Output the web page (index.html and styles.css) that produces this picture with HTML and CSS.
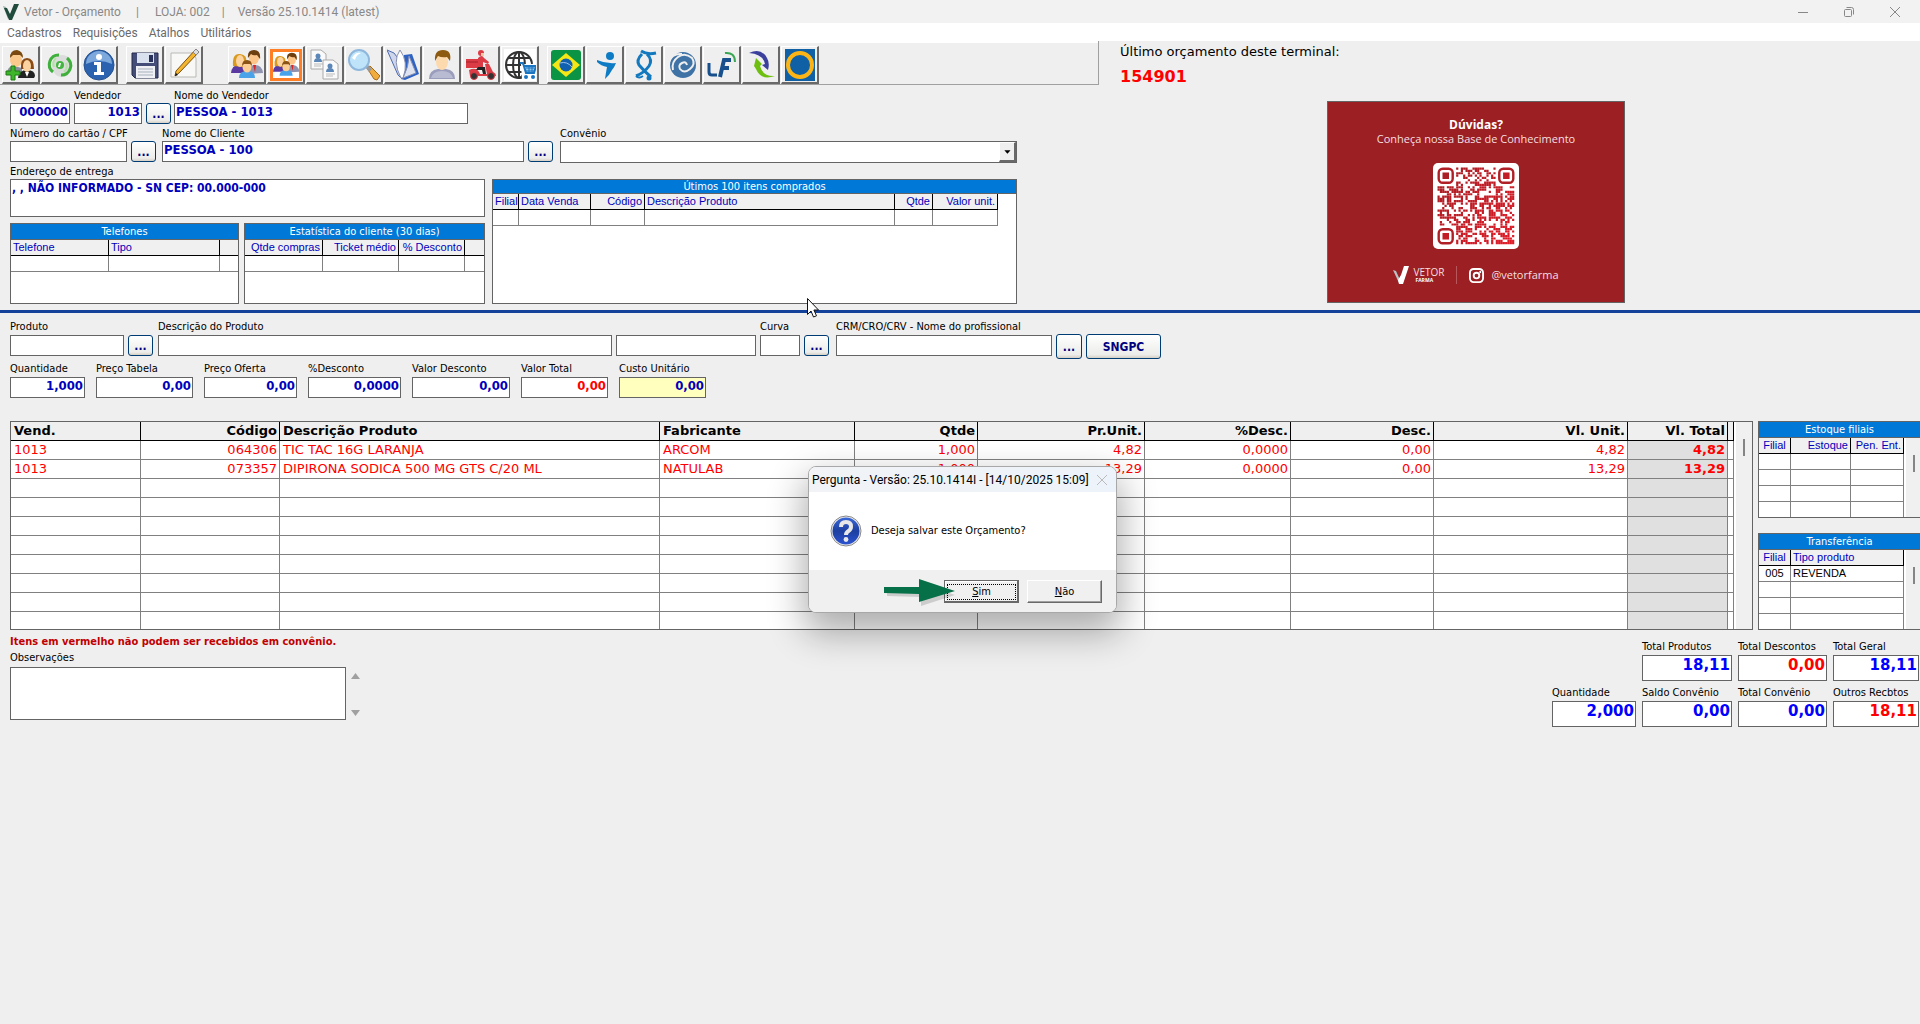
FILE: index.html
```html
<!DOCTYPE html>
<html lang="pt-BR">
<head>
<meta charset="utf-8">
<title>Vetor - Orçamento</title>
<link rel="stylesheet" href="styles.css">
</head>
<body>
<header class="titlebar">
  <svg class="logo" viewBox="0 0 16 16"><path d="M0 2l3 1 3 8-1 4z" fill="#9ab0a5"/><path d="M1 4l3 0 3 6 4-10h5l-7 16H6z" fill="#1f4a3c"/></svg>
  <span class="t-app">Vetor - Orçamento</span><span class="t-bar">|</span><span class="t-shop">LOJA: 002</span><span class="t-bar near">|</span><span class="t-ver">Versão 25.10.1414 (latest)</span>
  <div class="winctl">
    <button aria-label="Minimizar"><svg viewBox="0 0 12 12"><path d="M1 6.5h10"/></svg></button>
    <button aria-label="Restaurar"><svg viewBox="0 0 12 12"><rect x="1.500" y="3.500" width="7" height="7" rx="1"/><path d="M3.500 1.500h5q2 0 2 2v5"/></svg></button>
    <button aria-label="Fechar"><svg viewBox="0 0 12 12"><path d="M1 1l10 10M11 1L1 11"/></svg></button>
  </div>
</header>
<nav class="menu"><a href="#">Cadastros</a><a href="#">Requisições</a><a href="#">Atalhos</a><a href="#">Utilitários</a></nav>

<main>
<section class="top">
  <div class="top-left">
    <div class="toolbar">
      <div class="tools">
        <button aria-label="Cadastro de clientes"><svg viewBox="0 0 32 32"><path d="M2 25q0-8 7-8l8 2v7z" fill="#8a8f9c"/><ellipse cx="11" cy="11" rx="6" ry="7" fill="#fbc98c"/><path d="M5 9q0-8 7-8 6 1 6 8l-3-3-7 0z" fill="#7a4a10"/><path d="M13 29q1-8 9-8t8 6l-1 2z" fill="#222"/><path d="M16 20q-1-11 6-11t7 11z" fill="#8a4b14"/><ellipse cx="22" cy="17" rx="4" ry="6" fill="#fbd3a0"/><path d="M20 23l2 5 2-5z" fill="#fff"/><path d="M6 17h4v5h5v4h-5v5H6v-5H1v-4h5z" fill="#3fb52c" stroke="#1d7a12"/></svg></button>
        <button aria-label="Atualizar"><svg viewBox="0 0 32 32"><ellipse cx="18" cy="17" rx="10" ry="11" fill="#dcdcdc"/><circle cx="16" cy="16" r="4" fill="#43b540"/><g fill="none" stroke="#3fb03c" stroke-width="3"><path d="M15 6A9.500 9.500 0 0 0 9 23M17 26a9.500 9.500 0 0 0 6-17"/></g><path d="M12 9a8 8 0 0 0-2 9M20 23a8 8 0 0 0 2-9" fill="none" stroke="#b5e0a8" stroke-width="2"/><path d="M15 14h2l-1 4h-2z" fill="#fff"/></svg></button>
        <button aria-label="Informações"><svg viewBox="0 0 32 32"><circle cx="16" cy="16" r="15" fill="#2a62b0" stroke="#27518e"/><path d="M3 15a13 13 0 0 1 26 0q-13-6-26 0z" fill="#7da8dc"/><circle cx="16" cy="8" r="3" fill="#fff"/><path d="M11 13h7v10h3v3H11v-3h3v-7h-3z" fill="#fff"/></svg></button>
      </div>
      <div class="tools">
        <button aria-label="Salvar"><svg viewBox="0 0 32 32"><path d="M3 4h26v25H6l-3-3z" fill="#444c78" stroke="#202848"/><path d="M8 4h17v10H8z" fill="#d9e1ee"/><path d="M20 6h4v7h-4z" fill="#28305c"/><path d="M7 17h19v12H7z" fill="#eef0f4"/><path d="M9 20h15M9 23h15M9 26h15" stroke="#a9afbd"/></svg></button>
        <button aria-label="Editar"><svg viewBox="0 0 32 32"><path d="M3 4h21l4 5v19H3z" fill="#f8f8f6" stroke="#b9b9b4"/><path d="M28 0l3 3L11 24l-4 3 1-5z" fill="#f4b62e" stroke="#7b5010"/><path d="M28 0l3 3-3 3-3-3z" fill="#ddd" stroke="#888"/><path d="M7 27l1-3 2 2z" fill="#111"/></svg></button>
      </div>
      <div class="tools wide">
        <button aria-label="Grupo de clientes"><svg viewBox="0 0 32 32"><use href="#people"/></svg></button>
        <button aria-label="Clientes em destaque"><svg viewBox="0 0 32 32"><path d="M1.500 1.500h29v29h-29z" fill="#fff" stroke="#ff7f27" stroke-width="3"/><use href="#people" transform="translate(3 3) scale(.82)"/></svg></button>
        <button aria-label="Copiar cadastro"><svg viewBox="0 0 32 32"><g id="card"><path d="M2 1h10l5 4v15H2z" fill="#fafafa" stroke="#aaa"/><circle cx="9" cy="7" r="2.500" fill="#5b86b8"/><path d="M5 13q0-4 4-4t4 4z" fill="#5b86b8"/><path d="M5 15h9M5 17h7" stroke="#bbb"/></g><use href="#card" transform="translate(12 10)"/></svg></button>
        <button aria-label="Pesquisar"><svg viewBox="0 0 32 32"><path d="M19 19l3-2 10 10-3 4-3-1z" fill="#f0ad3e" stroke="#a76a1c"/><path d="M17 18l3-2 4 4-3 3z" fill="#999"/><circle cx="11" cy="11" r="10" fill="#bfe4fa" stroke="#8fb7dc" stroke-width="2"/><path d="M4 9q3-6 9-5-5 2-6 7z" fill="#fff"/></svg></button>
        <button aria-label="Catálogo"><svg viewBox="0 0 32 32"><path d="M14 30l3-24 8-1 7 20-14 6z" fill="#2e62c4"/><path d="M0 1l11 25 4 4q1-14-5-22L7 4z" fill="#cfd5ea" stroke="#4d6cb0"/><path d="M14 29Q5 12 13 1q9 12 3 28z" fill="#fff" stroke="#8790b0"/><path d="M16 29q6-12 6-22l7 17z" fill="#dfe3f0" stroke="#8790b0"/></svg></button>
        <button aria-label="Usuário"><svg viewBox="0 0 32 32"><path d="M3 30q0-9 9-10h8q9 1 9 10z" fill="#9a9dbb"/><path d="M5 29q2-7 11-7t11 7z" fill="#b9bbd2"/><ellipse cx="16" cy="13" rx="6" ry="8" fill="#fdd9ae"/><path d="M9 12Q8 1 17 1t7 11l-3-4q-5 1-9-1z" fill="#8c5a10"/></svg></button>
        <button aria-label="Entrega"><svg viewBox="0 0 32 32"><g fill="#dc3c46"><path d="M1 10h12v9H1zM4 21q8-4 11 4h7l-2-10h4l4 8q3 1 3 4H5z"/><path d="M13 9q4-4 6 0l5 4-1 2-5-2v7h-5z"/></g><circle cx="16" cy="4" r="3" fill="#dc3c46"/><path d="M16 4h3v3h-3z" fill="#f7c9a0"/><path d="M13 18h7l1 7h-3l-1-4h-6z" fill="#222"/><g fill="#333" stroke="#dc3c46"><circle cx="9" cy="27" r="3.500"/><circle cx="26" cy="27" r="3.500"/></g><path d="M1 13h12" stroke="#a5202a"/></svg></button>
        <button aria-label="Loja virtual"><svg viewBox="0 0 32 32"><path d="M0 0h32v32H0z" fill="#fff"/><g fill="none" stroke="#333" stroke-width="2"><circle cx="15" cy="16" r="13"/><ellipse cx="15" cy="16" rx="6" ry="13"/><path d="M15 3v26M2 16h26M4 9h22M4 23h22"/></g><path d="M17 15h15v16H18z" fill="#fff"/><path d="M16 14h3l3 10h8l2-7H20" fill="#8fc4ec" stroke="#1b74c0" stroke-width="2"/><path d="M22 19h8M22 22h8M25 17v7M28 17v7" stroke="#1b74c0"/><circle cx="22" cy="28" r="2" fill="#1b74c0"/><circle cx="29" cy="28" r="2" fill="#1b74c0"/></svg></button>
      </div>
      <div class="tools">
        <button aria-label="Farmácia Popular"><svg viewBox="0 0 32 32"><rect x="1" y="1" width="30" height="30" rx="3" fill="#0b9444"/><path d="M16 4l14 12-14 12L2 16z" fill="#f5e616"/><circle cx="16" cy="16" r="6.500" fill="#1060b0"/><path d="M10 14q7-2 12 4" stroke="#9cc3e8" fill="none"/></svg></button>
        <button aria-label="Convênio Vida"><svg viewBox="0 0 32 32"><g fill="#0d7cc4"><circle cx="21" cy="7" r="4"/><path d="M8 11q9 4 19 3-2 5-4 7-3 6-7 9 1-7 2-12-6-1-10-5z"/></g></svg></button>
        <button aria-label="Convênio Orbe"><svg viewBox="0 0 32 32"><path d="M13 2q6 4 15 2" fill="none" stroke="#1379bf" stroke-width="3"/><path d="M14 5q-6 6-3 11 5 6 12 12M19 5q6 6 2 12-5 7-13 10" fill="none" stroke="#1379bf" stroke-width="3"/><path d="M8 27q3 3 7 0" stroke="#1379bf" fill="none" stroke-width="2"/><circle cx="21" cy="29" r="2.500" fill="#1379bf"/></svg></button>
        <button aria-label="Convênio Espiral"><svg viewBox="0 0 32 32"><circle cx="16" cy="16" r="13" fill="#3f73a6"/><g fill="none" stroke="#efefef" stroke-width="2"><path d="M20 16q-1-4-5-2t-2 6q4 5 10 0t2-11q-7-6-14-1T6 21"/><path d="M2 13Q5 4 15 5"/></g></svg></button>
        <button aria-label="Convênio LF"><svg viewBox="0 0 32 32"><path d="M3 14v9q0 3 3 3h5" fill="none" stroke="#17508c" stroke-width="3"/><path d="M14 28l4-17h7M15 19h8" fill="none" stroke="#17508c" stroke-width="4"/><path d="M19 4q10-1 10 9" fill="none" stroke="#3aa655" stroke-width="2"/></svg></button>
        <button aria-label="Convênio Ciclo"><svg viewBox="0 0 32 32"><path d="M4 4Q16-2 22 9q3 5 1 12l-6-5 3-1Q18 5 4 4z" fill="#3a409c"/><path d="M30 27Q16 32 11 20l-2-3 2-8 6 6-2 2q3 11 15 10z" fill="#6fbf10"/></svg></button>
        <button aria-label="Convênio Anel"><svg viewBox="0 0 32 32"><path d="M1 0h30v32H1z" fill="#0f60a5"/><circle cx="16" cy="16" r="12" fill="none" stroke="#fdb515" stroke-width="4"/></svg></button>
      </div>
    </div>

    <form class="form client">
      <div class="row row-seller">
        <div class="field"><label for="cod">Código</label><input id="cod" class="num" value="000000"></div>
        <div class="field"><label for="vend">Vendedor</label><input id="vend" class="num" value="1013"></div>
        <button type="button" class="dots">...</button>
        <div class="field"><label for="nvend">Nome do Vendedor</label><input id="nvend" value="PESSOA - 1013"></div>
      </div>
      <div class="row row-client">
        <div class="field"><label for="cpf">Número do cartão / CPF</label><input id="cpf"></div>
        <button type="button" class="dots">...</button>
        <div class="field"><label for="ncli">Nome do Cliente</label><input id="ncli" value="PESSOA - 100"></div>
        <button type="button" class="dots">...</button>
        <div class="field"><label for="conv">Convênio</label><div class="combo"><select id="conv"><option></option></select><svg viewBox="0 0 16 19"><path d="M5 8h7l-3.500 4z"/></svg></div></div>
      </div>
      <div class="row row-history">
        <div class="stack">
          <div class="field"><label for="end">Endereço de entrega</label><textarea id="end" class="addr">, , NÃO INFORMADO - SN CEP: 00.000-000</textarea></div>
          <div class="pair">
            <div class="panel"><h2>Telefones</h2>
              <table><colgroup><col class="w98"><col class="w111"><col class="w18"></colgroup><tr><th>Telefone</th><th>Tipo</th><th></th></tr><tr><td></td><td></td><td></td></tr></table></div>
            <div class="panel"><h2>Estatística do cliente (30 dias)</h2>
              <table><colgroup><col class="w78"><col class="w76"><col class="w66"><col class="w20"></colgroup><tr><th class="r">Qtde compras</th><th class="r">Ticket médio</th><th class="r">% Desconto</th><th></th></tr><tr><td></td><td></td><td></td><td></td></tr></table></div>
          </div>
        </div>
        <div class="panel bought"><h2>Útimos 100 itens comprados</h2>
          <div class="inset"><table><colgroup><col class="w26"><col class="w72"><col class="w54"><col class="w250"><col class="w38"><col class="w65"></colgroup><tr><th>Filial</th><th>Data Venda</th><th class="r">Código</th><th>Descrição Produto</th><th class="r">Qtde</th><th class="r">Valor unit.</th></tr><tr><td></td><td></td><td></td><td></td><td></td><td></td></tr></table></div></div>
      </div>
    </form>
  </div>
  <aside class="top-right">
    <p class="last">Último orçamento deste terminal:</p>
    <p class="last-no">154901</p>
    <div class="banner">
      <strong>Dúvidas?</strong>
      <span>Conheça nossa Base de Conhecimento</span>
      <svg class="qr" viewBox="0 0 86 86" id="qr"><defs><linearGradient id="qg" x1="0" y1="0" x2="1" y2="1"><stop offset="0" stop-color="#a51e24"/><stop offset="1" stop-color="#e01c28"/></linearGradient></defs><rect width="86" height="86" rx="5" fill="#fff"/></svg>
      <div class="brand">
        <svg class="v" viewBox="0 0 18 18"><path d="M0 4l3 1 4 9-1 3z" fill="#b9c3c6"/><path d="M8 9l3-9h5l-6 18H6L5 14z" fill="#fff"/></svg>
        <div class="vf"><span>VETOR</span><b>FARMA</b></div>
        <i></i>
        <svg class="ig" viewBox="0 0 16 16"><rect x="1" y="1" width="14" height="14" rx="4"/><circle cx="8" cy="8" r="3"/><path d="M12 4v0.500"/></svg>
        <span>@vetorfarma</span>
      </div>
    </div>
  </aside>
</section>

<form class="form product">
  <div class="row row-product">
    <div class="field"><label for="prod">Produto</label><input id="prod"></div>
    <button type="button" class="dots">...</button>
    <div class="field"><label for="desc">Descrição do Produto</label><input id="desc"></div>
    <div class="field"><label for="desc2">&nbsp;</label><input id="desc2"></div>
    <div class="field"><label for="curva">Curva</label><input id="curva"></div>
    <button type="button" class="dots">...</button>
    <div class="field"><label for="crm">CRM/CRO/CRV - Nome do profissional</label><input id="crm"></div>
    <button type="button" class="dots tall">...</button>
    <button type="button" class="dots tall">SNGPC</button>
  </div>
  <div class="row row-values">
    <div class="field"><label for="q">Quantidade</label><input id="q" class="num" value="1,000"></div>
    <div class="field"><label for="pt">Preço Tabela</label><input id="pt" class="num" value="0,00"></div>
    <div class="field"><label for="po">Preço Oferta</label><input id="po" class="num" value="0,00"></div>
    <div class="field"><label for="pd">%Desconto</label><input id="pd" class="num" value="0,0000"></div>
    <div class="field"><label for="vd">Valor Desconto</label><input id="vd" class="num" value="0,00"></div>
    <div class="field"><label for="vt">Valor Total</label><input id="vt" class="num red" value="0,00"></div>
    <div class="field"><label for="cu">Custo Unitário</label><input id="cu" class="num cost" value="0,00"></div>
  </div>
</form>

<section class="items">
  <div class="grid">
    <table>
      <colgroup><col class="w130"><col class="w139"><col class="w380"><col class="w195"><col class="w123"><col class="w167"><col class="w146"><col class="w143"><col class="w194"><col class="w100"><col class="w6"></colgroup>
      <thead><tr><th>Vend.</th><th class="r">Código</th><th>Descrição Produto</th><th>Fabricante</th><th class="r">Qtde</th><th class="r">Pr.Unit.</th><th class="r">%Desc.</th><th class="r">Desc.</th><th class="r">Vl. Unit.</th><th class="r">Vl. Total</th><th></th></tr></thead>
      <tbody>
        <tr><td>1013</td><td class="r">064306</td><td>TIC TAC 16G LARANJA</td><td>ARCOM</td><td class="r">1,000</td><td class="r">4,82</td><td class="r">0,0000</td><td class="r">0,00</td><td class="r">4,82</td><td class="tot">4,82</td><td></td></tr>
        <tr><td>1013</td><td class="r">073357</td><td>DIPIRONA SODICA 500 MG GTS C/20 ML</td><td>NATULAB</td><td class="r">1,000</td><td class="r">13,29</td><td class="r">0,0000</td><td class="r">0,00</td><td class="r">13,29</td><td class="tot">13,29</td><td></td></tr>
        <tr><td></td><td></td><td></td><td></td><td></td><td></td><td></td><td></td><td></td><td class="tot"></td><td></td></tr>
        <tr><td></td><td></td><td></td><td></td><td></td><td></td><td></td><td></td><td></td><td class="tot"></td><td></td></tr>
        <tr><td></td><td></td><td></td><td></td><td></td><td></td><td></td><td></td><td></td><td class="tot"></td><td></td></tr>
        <tr><td></td><td></td><td></td><td></td><td></td><td></td><td></td><td></td><td></td><td class="tot"></td><td></td></tr>
        <tr><td></td><td></td><td></td><td></td><td></td><td></td><td></td><td></td><td></td><td class="tot"></td><td></td></tr>
        <tr><td></td><td></td><td></td><td></td><td></td><td></td><td></td><td></td><td></td><td class="tot"></td><td></td></tr>
        <tr><td></td><td></td><td></td><td></td><td></td><td></td><td></td><td></td><td></td><td class="tot"></td><td></td></tr>
        <tr><td></td><td></td><td></td><td></td><td></td><td></td><td></td><td></td><td></td><td class="tot"></td><td></td></tr>
      </tbody>
    </table>
    <div class="scroll"><span></span></div>
  </div>
  <aside class="side">
    <div class="panel stock"><h2>Estoque filiais</h2><div class="body">
      <table><colgroup><col class="w32"><col class="w60"><col class="w53"></colgroup><tr><th class="c">Filial</th><th class="r">Estoque</th><th class="r">Pen. Ent.</th></tr><tr><td></td><td></td><td></td></tr><tr><td></td><td></td><td></td></tr><tr><td></td><td></td><td></td></tr><tr><td></td><td></td><td></td></tr></table>
      <div class="scroll"><span></span></div></div></div>
    <div class="panel stock"><h2>Transferência</h2><div class="body">
      <table><colgroup><col class="w32"><col class="w113"></colgroup><tr><th class="c">Filial</th><th>Tipo produto</th></tr><tr><td class="c">005</td><td>REVENDA</td></tr><tr><td></td><td></td></tr><tr><td></td><td></td></tr><tr><td></td><td></td></tr></table>
      <div class="scroll"><span></span></div></div></div>
  </aside>
</section>

<section class="footer">
  <div class="notes">
    <p class="warn">Itens em vermelho não podem ser recebidos em convênio.</p>
    <label for="obs">Observações</label>
    <div class="obs"><textarea id="obs"></textarea><svg viewBox="0 0 9 53"><path d="M4.500 6L9 12H0zM4.500 49L9 43H0z" fill="#a0a0a0"/></svg></div>
  </div>
  <div class="totals">
    <div class="field c2"><label for="t1">Total Produtos</label><input id="t1" value="18,11"></div>
    <div class="field"><label for="t2">Total Descontos</label><input id="t2" class="red" value="0,00"></div>
    <div class="field"><label for="t3">Total Geral</label><input id="t3" value="18,11"></div>
    <div class="field"><label for="t4">Quantidade</label><input id="t4" value="2,000"></div>
    <div class="field"><label for="t5">Saldo Convênio</label><input id="t5" value="0,00"></div>
    <div class="field"><label for="t6">Total Convênio</label><input id="t6" value="0,00"></div>
    <div class="field"><label for="t7">Outros Recbtos</label><input id="t7" class="red" value="18,11"></div>
  </div>
</section>
</main>

<div class="dialog" role="dialog" aria-labelledby="dt">
  <header><span id="dt">Pergunta - Versão: 25.10.1414I - [14/10/2025 15:09]</span><button aria-label="Fechar"><svg viewBox="0 0 12 12"><path d="M1 1l10 10M11 1L1 11"/></svg></button></header>
  <div class="ask">
    <svg viewBox="0 0 32 32"><defs><linearGradient id="qb" x1="0" y1="0" x2="0" y2="1"><stop offset="0" stop-color="#3a68d8"/><stop offset=".5" stop-color="#1c3fa0"/><stop offset="1" stop-color="#2c52d0"/></linearGradient></defs><circle cx="16" cy="16" r="15" fill="#eee" stroke="#888"/><circle cx="16" cy="16" r="13.500" fill="url(#qb)"/><path d="M11 12q0-5 5-5t5 4.500q0 3-2.500 4.500T16 20" fill="none" stroke="#e8e8e8" stroke-width="4"/><circle cx="16" cy="24.500" r="2.400" fill="#e8e8e8"/></svg>
    <p>Deseja salvar este Orçamento?</p>
  </div>
  <footer><button class="def"><span><u>S</u>im</span></button><button><span><u>N</u>ão</span></button></footer>
  <svg class="arrow" viewBox="0 0 74 30"><path d="M2 9l34 1V2l34 12-34 11v-9L2 15z" fill="#000" opacity=".15" transform="translate(1 2)"/><path d="M0 8h35V0l36 12-36 11v-8L0 14z" fill="#067048"/></svg>
</div>
<svg class="cursor" viewBox="0 0 12 20"><path d="M.5.500v16l3.500-3.500 2.500 6 3-1.200-2.600-5.800h4.600z" fill="#fff" stroke="#111"/></svg>

<svg class="defs" aria-hidden="true"><g id="people"><path d="M17 25q0-9 7-9t8 8z" fill="#8f93b0"/><ellipse cx="23" cy="9" rx="5" ry="6.500" fill="#fcc58a"/><path d="M17 9q-1-8 6-8t6 9l-3-4q-4 1-6-1z" fill="#6e4010"/><path d="M22 16h3l-1 7z" fill="#d22"/><path d="M0 24q1-9 9-8l6 3v5z" fill="#5a3aa0"/><path d="M2 17Q1 4 9 5t6 9l-2 4z" fill="#d99a20"/><ellipse cx="9" cy="12" rx="4" ry="6" fill="#fdd3a0"/><path d="M8 29q0-7 8-7t8 7z" fill="#4aa3e8"/><ellipse cx="16" cy="18" rx="4.500" ry="5.500" fill="#fdcd96"/><path d="M11 17q0-6 5-6t5 6l-2-2h-6z" fill="#8a5416"/></g></svg>
<script src="qr.js"></script>
</body>
</html>
```
FILE: qr.js
```js
// Draws the 33x33 module code of the help banner.
const svg = document.getElementById("qr");
const step = 2.33, left = 4.5;
const inFinder = (x, y) => (x < 8 && y < 8) || (x > 24 && y < 8) || (x < 8 && y > 24);
let d = "";
let seed = 11982504;
for (let y = 0; y < 33; y++) {
  for (let x = 0; x < 33; x++) {
    seed = (seed * 1103515 + 12345) % 2147483648;
    if (!inFinder(x, y) && (seed >> 14) % 100 < 58) {
      const px = (left + x * step).toFixed(2), py = (left + y * step).toFixed(2);
      d += `M${px} ${py}h2.2v2.2h-2.2z`;
    }
  }
}
for (const [cx, cy] of [[0, 0], [26, 0], [0, 26]]) {
  const px = left + cx * step, py = left + cy * step;
  d += `M${px + 5} ${py + 5}h6.500v6.500h-6.500z`;
  const r = document.createElementNS("http://www.w3.org/2000/svg", "rect");
  r.setAttribute("x", px + 1.2); r.setAttribute("y", py + 1.2);
  r.setAttribute("width", 14); r.setAttribute("height", 14); r.setAttribute("rx", 4);
  r.setAttribute("fill", "none"); r.setAttribute("stroke", "#b01e26"); r.setAttribute("stroke-width", 2.4);
  svg.append(r);
}
const p = document.createElementNS("http://www.w3.org/2000/svg", "path");
p.setAttribute("d", d);
p.setAttribute("fill", "url(#qg)");
svg.append(p);
```
FILE: styles.css
```css
* { box-sizing: border-box; }
body { margin: 0; background: #efefef; color: #000; font: 11px/14px "DejaVu Sans Condensed", "DejaVu Sans", sans-serif; min-height: 100vh; }
p, h2 { margin: 0; }
button { font: inherit; padding: 0; }
svg { display: block; }
.defs { display: none; }

.titlebar { display: flex; align-items: center; height: 23px; padding-left: 3px; background: #f2f2f2; color: #888; font: 12px/16px Roboto, "Open Sans", sans-serif; }
.logo { width: 16px; height: 16px; margin-right: 5px; }
.t-bar { width: 4px; margin: 0 15px; }
.t-bar.near { margin: 0 12px; }
.winctl { display: flex; gap: 34px; margin-left: auto; padding-right: 19px; }
.winctl button, .dialog header button { border: 0; background: none; width: 12px; height: 12px; }
.winctl svg, .dialog header svg { width: 12px; height: 12px; fill: none; stroke: #888; }
.menu { display: flex; gap: 11px; height: 18px; padding-left: 7px; background: #fff; font: 12px/20px Roboto, "Open Sans", sans-serif; }
.menu a { color: #6a6a6a; text-decoration: none; }

.top { display: flex; border-bottom: 3px solid #14429b; padding-bottom: 6px; }
.top-left { width: 1099px; }
.toolbar { display: flex; gap: 8px; height: 44px; padding: 5px 0 0 2px; border-right: 1px solid #a0a0a0; border-bottom: 1px solid #a0a0a0; box-shadow: inset 0 2px #fff; }
.tools { display: flex; gap: 1px; }
.tools.wide { margin-left: 17px; }
.tools button { width: 38px; height: 38px; border: 1px solid #fff; border-right: 2px solid #696969; border-bottom: 2px solid #696969; background: #efefef; display: grid; place-items: center; }
.tools svg { width: 32px; height: 32px; }

.row { display: grid; column-gap: 4px; align-items: start; }
.client { display: grid; gap: 3px; padding: 4px 0 0 10px; }
.row-seller { grid-template-columns: 60px 68px 24px 294px; }
.row-client { grid-template-columns: 117px 27px 362px 28px 457px; height: 35px; }
.row-history { grid-template-columns: 475px 525px; column-gap: 7px; }
.stack { display: grid; gap: 6px; }
.pair { display: grid; grid-template-columns: 229px 241px; gap: 5px; }
.field { display: flex; flex-direction: column; min-width: 0; }
.field label { white-space: nowrap; height: 14px; }
input, textarea, select { font: bold 13px/16px "DejaVu Sans Condensed", "DejaVu Sans", sans-serif; color: #0000bb; background: #fff; border: 1px solid #646464; border-radius: 0; margin: 0; width: 100%; outline: 0; }
input { height: 21px; padding: 0 1px 4px; }
textarea { resize: none; display: block; padding: 0 1px; overflow: hidden; font-size: 12px; }
.num { text-align: right; }
.addr { height: 38px; }
.red { color: #f00; }
.cost { background: #ffffbe; }
.dots { width: 25px; height: 21px; margin-top: 14px; border: 1px solid #003c74; border-radius: 3px; background: linear-gradient(#fff, #ececea 85%, #d6d0c5); color: #000080; font-weight: bold; font-size: 12px; }
.combo { display: flex; height: 22px; border: 1px solid #646464; background: #fff; }
.combo select { flex: 1; border: 0; appearance: none; background: #fff; }
.combo svg { width: 17px; height: 20px; background: #f0f0f0; border: 1px solid #fff; border-right: 2px solid #696969; border-bottom: 2px solid #696969; }

.panel { border: 1px solid #646464; background: #fff; height: 81px; overflow: hidden; }
.panel h2 { height: 16px; font: 11px/15px "DejaVu Sans Condensed", "DejaVu Sans", sans-serif; color: #fff; background: #0078d7; text-align: center; border-bottom: 1px solid #646464; white-space: nowrap; }
.bought { height: 125px; align-self: end; }
.bought h2 { height: 14px; line-height: 14px; }
.inset { padding-right: 18px; }
table { border-collapse: separate; border-spacing: 0; table-layout: fixed; width: 100%; }
th, td { padding: 0 2px; text-align: left; white-space: nowrap; overflow: hidden; }
th.r, td.r { text-align: right; }
th.c, td.c { text-align: center; }
.panel th, .panel td { height: 16px; font: 11px/15px "Liberation Sans", Arial, sans-serif; border-right: 1px solid #808080; border-bottom: 1px solid #808080; }
.panel th { color: #0000bb; background: #f0f0f0; border-color: #000; }
.pair .panel tr > :last-child { border-right: 0; }

.product { padding: 7px 0 0 10px; }
.product .field { gap: 1px; }
.row-product { grid-template-columns: 114px 26px 454px 140px 40px 28px 216px 26px 75px; }
.row-values { grid-template-columns: 75px 97px 93px 93px 98px 87px 87px; column-gap: 11px; margin-top: 3px; }
.product .dots { margin-top: 15px; }
.product .dots.tall { width: 100%; height: 25px; margin-top: 14px; }

.items { display: flex; gap: 5px; padding: 23px 0 0 10px; }
.grid { flex: 1; display: flex; height: 209px; border: 1px solid #646464; background: #fff; overflow: hidden; }
.grid table { flex: 1; width: 0; height: 207px; font: 13px/18px "DejaVu Sans", sans-serif; }
.grid th, .grid td { height: 19px; padding: 0 2px 0 3px; border-right: 1px solid #808080; border-bottom: 1px solid #808080; }
.grid th { background: #efefef; border-color: #000; }
.grid td { color: #f00; }
.grid .tot { background: #e0e0e0; font-weight: bold; text-align: right; }
.grid tbody tr:last-child td { height: 17px; border-bottom: 0; }
.scroll { width: 18px; border-left: 2px solid #fff; background: #f0f0f0; padding: 17px 0 0 7px; }
.scroll span { display: block; width: 2px; height: 17px; background: #858585; }
.side { width: 162px; display: flex; flex-direction: column; justify-content: space-between; }
.stock { height: 97px; border-right: 0; }
.stock .body { display: flex; }
.stock table { width: 146px; }

.footer { display: flex; justify-content: space-between; padding: 5px 1px 0 10px; }
.notes { display: grid; gap: 2px; align-content: start; }
.warn { color: #c00000; font-weight: bold; }
.obs { display: flex; gap: 5px; }
.obs textarea { width: 336px; height: 53px; }
.obs svg { width: 9px; height: 53px; }
.totals { display: grid; grid-template-columns: 84px 90px 89px 86px; gap: 5px 6px; padding-top: 5px; align-content: start; }
.totals .field { gap: 1px; }
.totals .c2 { grid-column: 2; }
.totals input { height: 26px; padding: 0 1px 6px; text-align: right; font: bold 15px/18px "DejaVu Sans", sans-serif; color: #00f; }
.totals input.red { color: #f00; }

.top-right { padding: 2px 0 0 21px; }
.last { font: 13px/18px "DejaVu Sans", sans-serif; }
.last-no { font: bold 16px/20px "DejaVu Sans", sans-serif; color: #f00; padding-top: 6px; }
.banner { margin: 14px 0 0 207px; width: 298px; height: 202px; border: 1px solid #646464; background: #9b1f23; color: #f5dfe0; display: flex; flex-direction: column; align-items: center; padding-top: 16px; font: 11px/14px "Open Sans", sans-serif; }
.banner strong { color: #fff; font-size: 12px; }
.qr { width: 86px; height: 86px; margin-top: 17px; }
.brand { display: flex; align-items: center; margin-top: 17px; }
.v { width: 18px; height: 18px; margin-right: 2px; }
.vf { display: flex; flex-direction: column; }
.vf span { font-size: 10px; line-height: 10px; }
.vf b { font-size: 5px; line-height: 6px; color: #fff; padding-left: 2px; }
.brand i { width: 1px; height: 18px; background: #b8575b; margin: 0 12px; }
.ig { width: 15px; height: 15px; fill: none; stroke: #fff; stroke-width: 2; stroke-linecap: round; margin-right: 7px; }

.dialog { position: absolute; left: 808px; top: 466px; width: 309px; border: 1px solid #a8a8a8; border-radius: 8px; background: #fff; box-shadow: 0 16px 36px 4px rgba(0, 0, 0, .32); }
.dialog header { display: flex; justify-content: space-between; align-items: center; height: 25px; padding: 0 8px 0 3px; border-radius: 7px 7px 0 0; background: linear-gradient(90deg, #f1f3f6, #edf3fa); font: 12px/16px Roboto, "Open Sans", sans-serif; }
.dialog header svg { stroke: #bbb; }
.ask { display: flex; align-items: center; gap: 9px; height: 78px; padding-left: 21px; }
.ask svg { width: 32px; height: 32px; }
.dialog footer { display: flex; gap: 8px; justify-content: flex-end; height: 42px; padding: 10px 14px; border-radius: 0 0 7px 7px; background: #f0f0f0; }
.dialog footer button { width: 75px; height: 23px; padding: 2px; border: 1px solid #fff; border-right: 1px solid #696969; border-bottom: 1px solid #696969; box-shadow: inset -1px -1px #a0a0a0; background: #f0f0f0; }
.dialog footer .def { border-color: #696969; box-shadow: inset -1px -1px #696969, inset 1px 1px #fff; }
.def span { display: block; border: 1px dotted #000; line-height: 14px; }
.arrow { position: absolute; left: 75px; top: 112px; width: 74px; height: 30px; }
.cursor { position: absolute; left: 807px; top: 298px; width: 12px; height: 20px; }

.w6 { width: 6px; } .w18 { width: 18px; } .w20 { width: 20px; } .w26 { width: 26px; } .w32 { width: 32px; }
.w38 { width: 38px; } .w53 { width: 53px; } .w54 { width: 54px; } .w60 { width: 60px; } .w65 { width: 65px; }
.w66 { width: 66px; } .w72 { width: 72px; } .w76 { width: 76px; } .w78 { width: 78px; } .w98 { width: 98px; }
.w100 { width: 100px; } .w111 { width: 111px; } .w113 { width: 113px; } .w123 { width: 123px; } .w130 { width: 130px; }
.w139 { width: 139px; } .w143 { width: 143px; } .w146 { width: 146px; } .w167 { width: 167px; } .w194 { width: 194px; }
.w195 { width: 195px; } .w250 { width: 250px; } .w380 { width: 380px; }
```
